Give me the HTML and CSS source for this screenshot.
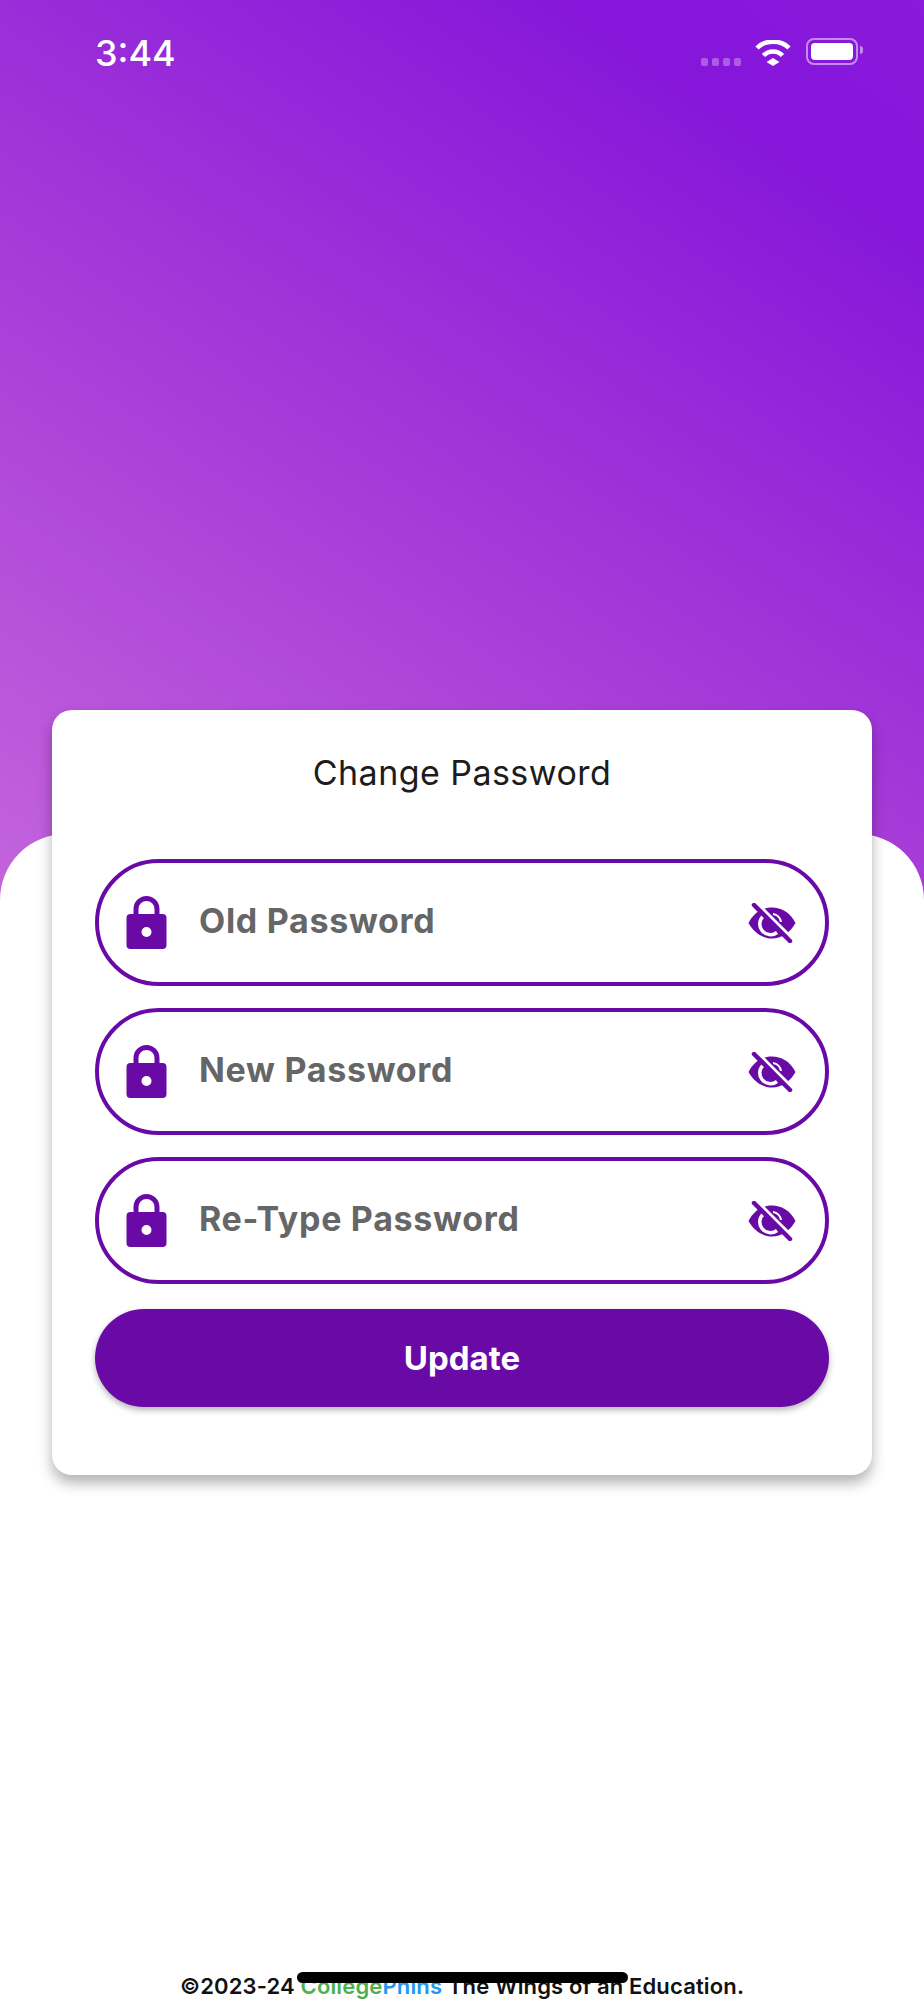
FILE: index.html
```html
<!DOCTYPE html>
<html lang="en">

<head>
    <meta charset="UTF-8">
    <meta name="viewport" content="width=device-width, initial-scale=1.0">
    <title>Change Password</title>
    <link rel="stylesheet" href="styles.css">
</head>

<body>
    <svg class="defs" width="0" height="0">
        <symbol id="lock" viewBox="0 0 40 53">
            <path d="M9.500 19V13a10.500 10.500 0 0 1 21 0V19" fill="none" stroke="currentColor" stroke-width="5"/>
            <path fill-rule="evenodd" d="M4 18H36a4 4 0 0 1 4 4V49a4 4 0 0 1-4 4H4a4 4 0 0 1-4-4V22a4 4 0 0 1 4-4ZM20 31a5 5 0 1 0 0 10a5 5 0 1 0 0-10Z" fill="currentColor"/>
        </symbol>
        <symbol id="eye-off" viewBox="0 0 48 40">
            <path d="M0.500 20C6 9 15 4.500 24 4.500S42 9 47.500 20C42 30 33 35.500 24 35.500S6 30 0.500 20Z" fill="currentColor"/>
            <path d="M16 12.500A10.500 10.500 0 0 0 29 29.500" fill="none" stroke="#fff" stroke-width="3.500"/>
            <path d="M25 11A9 9 0 0 1 33 19" fill="none" stroke="#fff" stroke-width="2"/>
            <path d="M7.500 1L43.500 37" stroke="#fff" stroke-width="6.500"/>
            <path d="M6 2L42 38" stroke="currentColor" stroke-width="4.500" stroke-linecap="round"/>
        </symbol>
    </svg>

    <div class="screen">
        <div class="hero">
            <div class="status-bar">
                <span class="time">3:44</span>
                <div class="status-icons">
                    <div class="signal"><i></i><i></i><i></i><i></i></div>
                    <svg class="wifi" viewBox="0 0 36 26">
                        <path d="M18 18l6.500 4-6.500 4-6.500-4Z" fill="#fff"/>
                        <path d="M8.500 15.500C13.500 10 22.500 10 27.500 15.500" fill="none" stroke="#fff" stroke-width="4.500"/>
                        <path d="M2 8C10 -0.500 26 -0.500 34 8" fill="none" stroke="#fff" stroke-width="4.500"/>
                    </svg>
                    <div class="battery"><div class="battery-fill"></div></div>
                </div>
            </div>
        </div>

        <div class="sheet">
            <div class="card">
                <h2 class="card-title">Change Password</h2>

                <div class="field">
                    <svg class="icon-lock"><use href="#lock"/></svg>
                    <span class="field-label">Old Password</span>
                    <svg class="icon-eye"><use href="#eye-off"/></svg>
                </div>
                <div class="field">
                    <svg class="icon-lock"><use href="#lock"/></svg>
                    <span class="field-label">New Password</span>
                    <svg class="icon-eye"><use href="#eye-off"/></svg>
                </div>
                <div class="field">
                    <svg class="icon-lock"><use href="#lock"/></svg>
                    <span class="field-label">Re-Type Password</span>
                    <svg class="icon-eye"><use href="#eye-off"/></svg>
                </div>

                <button class="update-button">Update</button>
            </div>

            <div class="footer">
                ©2023-24 <span class="green">College</span><span class="blue">Phins</span> The Wings of an Education.
            </div>
        </div>

        <div class="home-bar"></div>
    </div>
</body>

</html>
```

FILE: styles.css
```css
html,
body {
    margin: 0;
    padding: 0;
    background-color: #fff;
}

body {
    font-family: Inter, "Noto Sans", sans-serif;
    overflow: hidden;
}

.defs {
    position: absolute;
}

.screen {
    position: relative;
    display: flex;
    flex-direction: column;
    width: 924px;
    height: 2000px;
    overflow: hidden;
}

.hero {
    flex: none;
    height: 900px;
    background: linear-gradient(214deg, #8a19da 0%, #8516da 15%, #a53ad8 55%, #c464dc 100%);
}

.status-bar {
    display: flex;
    justify-content: space-between;
    padding: 31px 66px 0 95px;
}

.time {
    color: #fff;
    font-size: 36px;
    font-weight: 500;
    line-height: 44px;
}

.status-icons {
    display: flex;
    align-items: flex-start;
    padding-top: 7px;
}

.signal {
    display: flex;
    gap: 4px;
    margin-top: 20px;
    margin-right: 14px;
}

.signal i {
    width: 7px;
    height: 8px;
    border-radius: 2px;
    background-color: rgba(255, 255, 255, 0.3);
}

.wifi {
    width: 36px;
    height: 26px;
    margin-top: 2px;
    margin-right: 15px;
}

.battery {
    position: relative;
    box-sizing: border-box;
    width: 52px;
    height: 27px;
    padding: 3px;
    border: 2px solid rgba(255, 255, 255, 0.5);
    border-radius: 8px;
}

.battery::after {
    content: "";
    position: absolute;
    top: 6px;
    right: -7px;
    width: 3px;
    height: 8px;
    border-radius: 0 3px 3px 0;
    background-color: rgba(255, 255, 255, 0.5);
}

.battery-fill {
    height: 100%;
    border-radius: 4px;
    background-color: #fff;
}

.sheet {
    flex: 1;
    display: flex;
    flex-direction: column;
    margin-top: -66px;
    background-color: #fff;
    border-radius: 66px 66px 0 0;
}

.card {
    box-sizing: border-box;
    width: 820px;
    height: 765px;
    margin: -124px auto 0;
    padding: 0 43px;
    background-color: #fff;
    border-radius: 20px;
    box-shadow: 0 8px 14px rgba(0, 0, 0, 0.3);
}

.card-title {
    margin: 0;
    padding: 41px 0 64px;
    color: #1c1c1c;
    font-size: 34px;
    font-weight: 400;
    letter-spacing: 0.45px;
    line-height: 44px;
    text-align: center;
}

.field {
    box-sizing: border-box;
    display: flex;
    align-items: center;
    height: 127px;
    margin-bottom: 22px;
    padding: 0 29px 0 27px;
    border: 4px solid #6a0aa6;
    border-radius: 64px;
}

.icon-lock {
    width: 41px;
    height: 53px;
    color: #6a0aa6;
}

.field-label {
    flex: 1;
    margin-top: -5px;
    margin-left: 32px;
    color: #666;
    font-size: 34px;
    font-weight: 700;
    letter-spacing: 0.7px;
}

.icon-eye {
    width: 48px;
    height: 40px;
    color: #6a0aa6;
}

.update-button {
    display: block;
    width: 100%;
    height: 98px;
    margin-top: 25px;
    padding-bottom: 2px;
    border: none;
    border-radius: 49px;
    background-color: #6a0aa6;
    box-shadow: 0 3px 6px rgba(0, 0, 0, 0.3);
    color: #fff;
    font-family: Inter, "Noto Sans", sans-serif;
    font-size: 33px;
    font-weight: 700;
}

.footer {
    margin-top: auto;
    color: #111;
    font-size: 22px;
    font-weight: 600;
    letter-spacing: 0.15px;
    line-height: 28px;
    text-align: center;
}

.green {
    color: #4caf50;
}

.blue {
    color: #2196f3;
}

.home-bar {
    position: absolute;
    left: 297px;
    top: 1972px;
    width: 331px;
    height: 11px;
    border-radius: 6px;
    background-color: #000;
}
```
